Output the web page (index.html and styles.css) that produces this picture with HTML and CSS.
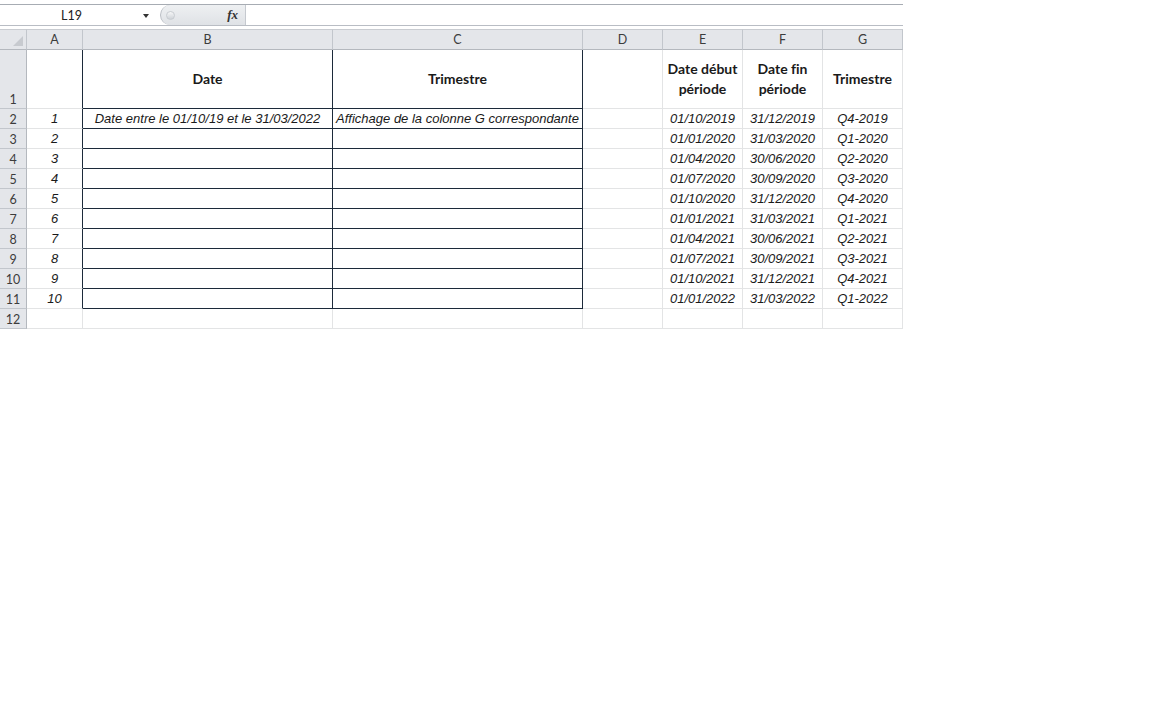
FILE: index.html
```html
<!DOCTYPE html>
<html lang="fr">
<head>
  <meta charset="UTF-8">
  <title>Trimestres</title>
  <link rel="stylesheet" href="styles.css">
</head>
<body>

  <div class="app">
    <!-- Barre de formule -->
    <div class="formula-bar">
      <div class="name-box">
        <span class="ref">L19</span>
        <span class="drop"></span>
      </div>
      <div class="fx-panel">
        <span class="knob"></span>
        <span class="fx">fx</span>
      </div>
      <div class="formula-input"></div>
    </div>

    <!-- Feuille -->
    <table class="sheet">
      <colgroup>
        <col class="w-hd">
        <col class="w-a">
        <col class="w-b">
        <col class="w-c">
        <col class="w-d">
        <col class="w-e">
        <col class="w-f">
        <col class="w-g">
      </colgroup>
      <thead>
        <tr>
          <th class="corner"></th>
          <th>A</th><th>B</th><th>C</th><th>D</th><th>E</th><th>F</th><th>G</th>
        </tr>
      </thead>
      <tbody>
        <tr class="r-title">
          <th class="rn">1</th>
          <td class="a edge"></td>
          <td class="box mid">Date</td>
          <td class="box mid">Trimestre</td>
          <td></td>
          <td class="mid">Date début<br>période</td>
          <td class="mid">Date fin<br>période</td>
          <td class="mid">Trimestre</td>
        </tr>
        <tr><th class="rn">2</th><td class="a edge">1</td><td class="box">Date entre le 01/10/19 et le 31/03/2022</td><td class="box">Affichage de la colonne G correspondante</td><td></td><td>01/10/2019</td><td>31/12/2019</td><td>Q4-2019</td></tr>
        <tr><th class="rn">3</th><td class="a edge">2</td><td class="box"></td><td class="box"></td><td></td><td>01/01/2020</td><td>31/03/2020</td><td>Q1-2020</td></tr>
        <tr><th class="rn">4</th><td class="a edge">3</td><td class="box"></td><td class="box"></td><td></td><td>01/04/2020</td><td>30/06/2020</td><td>Q2-2020</td></tr>
        <tr><th class="rn">5</th><td class="a edge">4</td><td class="box"></td><td class="box"></td><td></td><td>01/07/2020</td><td>30/09/2020</td><td>Q3-2020</td></tr>
        <tr><th class="rn">6</th><td class="a edge">5</td><td class="box"></td><td class="box"></td><td></td><td>01/10/2020</td><td>31/12/2020</td><td>Q4-2020</td></tr>
        <tr><th class="rn">7</th><td class="a edge">6</td><td class="box"></td><td class="box"></td><td></td><td>01/01/2021</td><td>31/03/2021</td><td>Q1-2021</td></tr>
        <tr><th class="rn">8</th><td class="a edge">7</td><td class="box"></td><td class="box"></td><td></td><td>01/04/2021</td><td>30/06/2021</td><td>Q2-2021</td></tr>
        <tr><th class="rn">9</th><td class="a edge">8</td><td class="box"></td><td class="box"></td><td></td><td>01/07/2021</td><td>30/09/2021</td><td>Q3-2021</td></tr>
        <tr><th class="rn">10</th><td class="a edge">9</td><td class="box"></td><td class="box"></td><td></td><td>01/10/2021</td><td>31/12/2021</td><td>Q4-2021</td></tr>
        <tr><th class="rn">11</th><td class="a edge">10</td><td class="box"></td><td class="box"></td><td></td><td>01/01/2022</td><td>31/03/2022</td><td>Q1-2022</td></tr>
        <tr><th class="rn">12</th><td class="a"></td><td></td><td></td><td></td><td></td><td></td><td></td></tr>
      </tbody>
    </table>
  </div>

</body>
</html>
```

FILE: styles.css
```css
:root {
  --head-bg: #e4e6ea;
  --head-line: #c2c6cc;
  --grid: #e3e4e5;
  --dark: #1c2a3a;
  --text: #1a1a1a;
}

* {
  box-sizing: border-box;
}

body {
  margin: 0;
  background: #ffffff;
  font-family: 'Liberation Sans', Arial, sans-serif;
  color: var(--text);
}

.app {
  width: 903px;
}

/* barre de formule */
.formula-bar {
  display: flex;
  height: 22px;
  margin-top: 4px;
  border-top: 1px solid #a7acb3;
  border-bottom: 1px solid #b9bdc4;
}

.name-box {
  width: 157px;
  display: flex;
  align-items: center;
  font-family: Lato, sans-serif;
  font-size: 12.5px;
  color: #222;
}

.name-box .ref {
  width: 143px;
  text-align: center;
}

.name-box .drop {
  width: 0;
  height: 0;
  border-left: 3.5px solid transparent;
  border-right: 3.5px solid transparent;
  border-top: 4px solid #333;
  margin-top: 1px;
}

.fx-panel {
  width: 85px;
  margin-left: 3px;
  display: flex;
  align-items: center;
  justify-content: space-between;
  padding: 0 7px 0 5px;
  background: linear-gradient(#eef0f2, #dfe2e6);
  border-radius: 11px 0 0 11px;
  border-left: 1px solid #b8bcc3;
}

.fx-panel .knob {
  width: 9px;
  height: 9px;
  border-radius: 50%;
  background: linear-gradient(#f6f7f8, #cfd3d8);
  border: 1px solid #c8ccd1;
}

.fx-panel .fx {
  font-family: 'Liberation Serif', 'Times New Roman', serif;
  font-style: italic;
  font-weight: bold;
  font-size: 13px;
  color: #333;
}

.formula-input {
  flex: 1;
  border-left: 1px solid #c5c9cf;
  background: #fff;
}

/* feuille */
.sheet {
  margin-top: 3px;
  border-collapse: separate;
  border-spacing: 0;
  table-layout: fixed;
  width: 903px;
}

.w-hd { width: 27px; }
.w-a { width: 56px; }
.w-b { width: 250px; }
.w-c { width: 250px; }
.w-d { width: 80px; }
.w-e { width: 80px; }
.w-f { width: 80px; }
.w-g { width: 80px; }

.sheet thead th {
  height: 21px;
  padding: 0;
  background: var(--head-bg);
  border-top: 1px solid #c9ccd1;
  border-right: 1px solid var(--head-line);
  border-bottom: 1px solid #b4b8be;
  font-family: Lato, sans-serif;
  font-weight: normal;
  font-size: 12.5px;
  color: #3c3c3c;
  text-align: center;
  vertical-align: middle;
}

.sheet thead th.corner {
  position: relative;
}

.sheet thead th.corner::after {
  content: "";
  position: absolute;
  right: 3px;
  bottom: 3px;
  border-left: 10px solid transparent;
  border-bottom: 10px solid #c7cacf;
}

.sheet tbody tr {
  height: 20px;
}

.sheet tbody tr.r-title {
  height: 59px;
}

.sheet th.rn {
  padding: 0 0 1px;
  background: var(--head-bg);
  border-right: 1px solid #b4b8be;
  border-bottom: 1px solid var(--head-line);
  font-family: Lato, sans-serif;
  font-weight: normal;
  font-size: 12.5px;
  color: #3c3c3c;
  text-align: center;
  vertical-align: bottom;
}

.sheet td {
  padding: 0 0 2px;
  border-right: 1px solid var(--grid);
  border-bottom: 1px solid var(--grid);
  font-size: 13px;
  font-style: italic;
  text-align: center;
  vertical-align: bottom;
  white-space: nowrap;
  overflow: hidden;
}

.sheet td.edge {
  border-right-color: var(--dark);
}

.sheet td.box {
  border-right-color: var(--dark);
  border-bottom-color: var(--dark);
}

.sheet td.mid {
  vertical-align: middle;
  padding: 0;
  font-family: Lato, sans-serif;
  font-style: normal;
  font-weight: bold;
  font-size: 14px;
  line-height: 20px;
  white-space: normal;
  font-variant-ligatures: none;
}
```
